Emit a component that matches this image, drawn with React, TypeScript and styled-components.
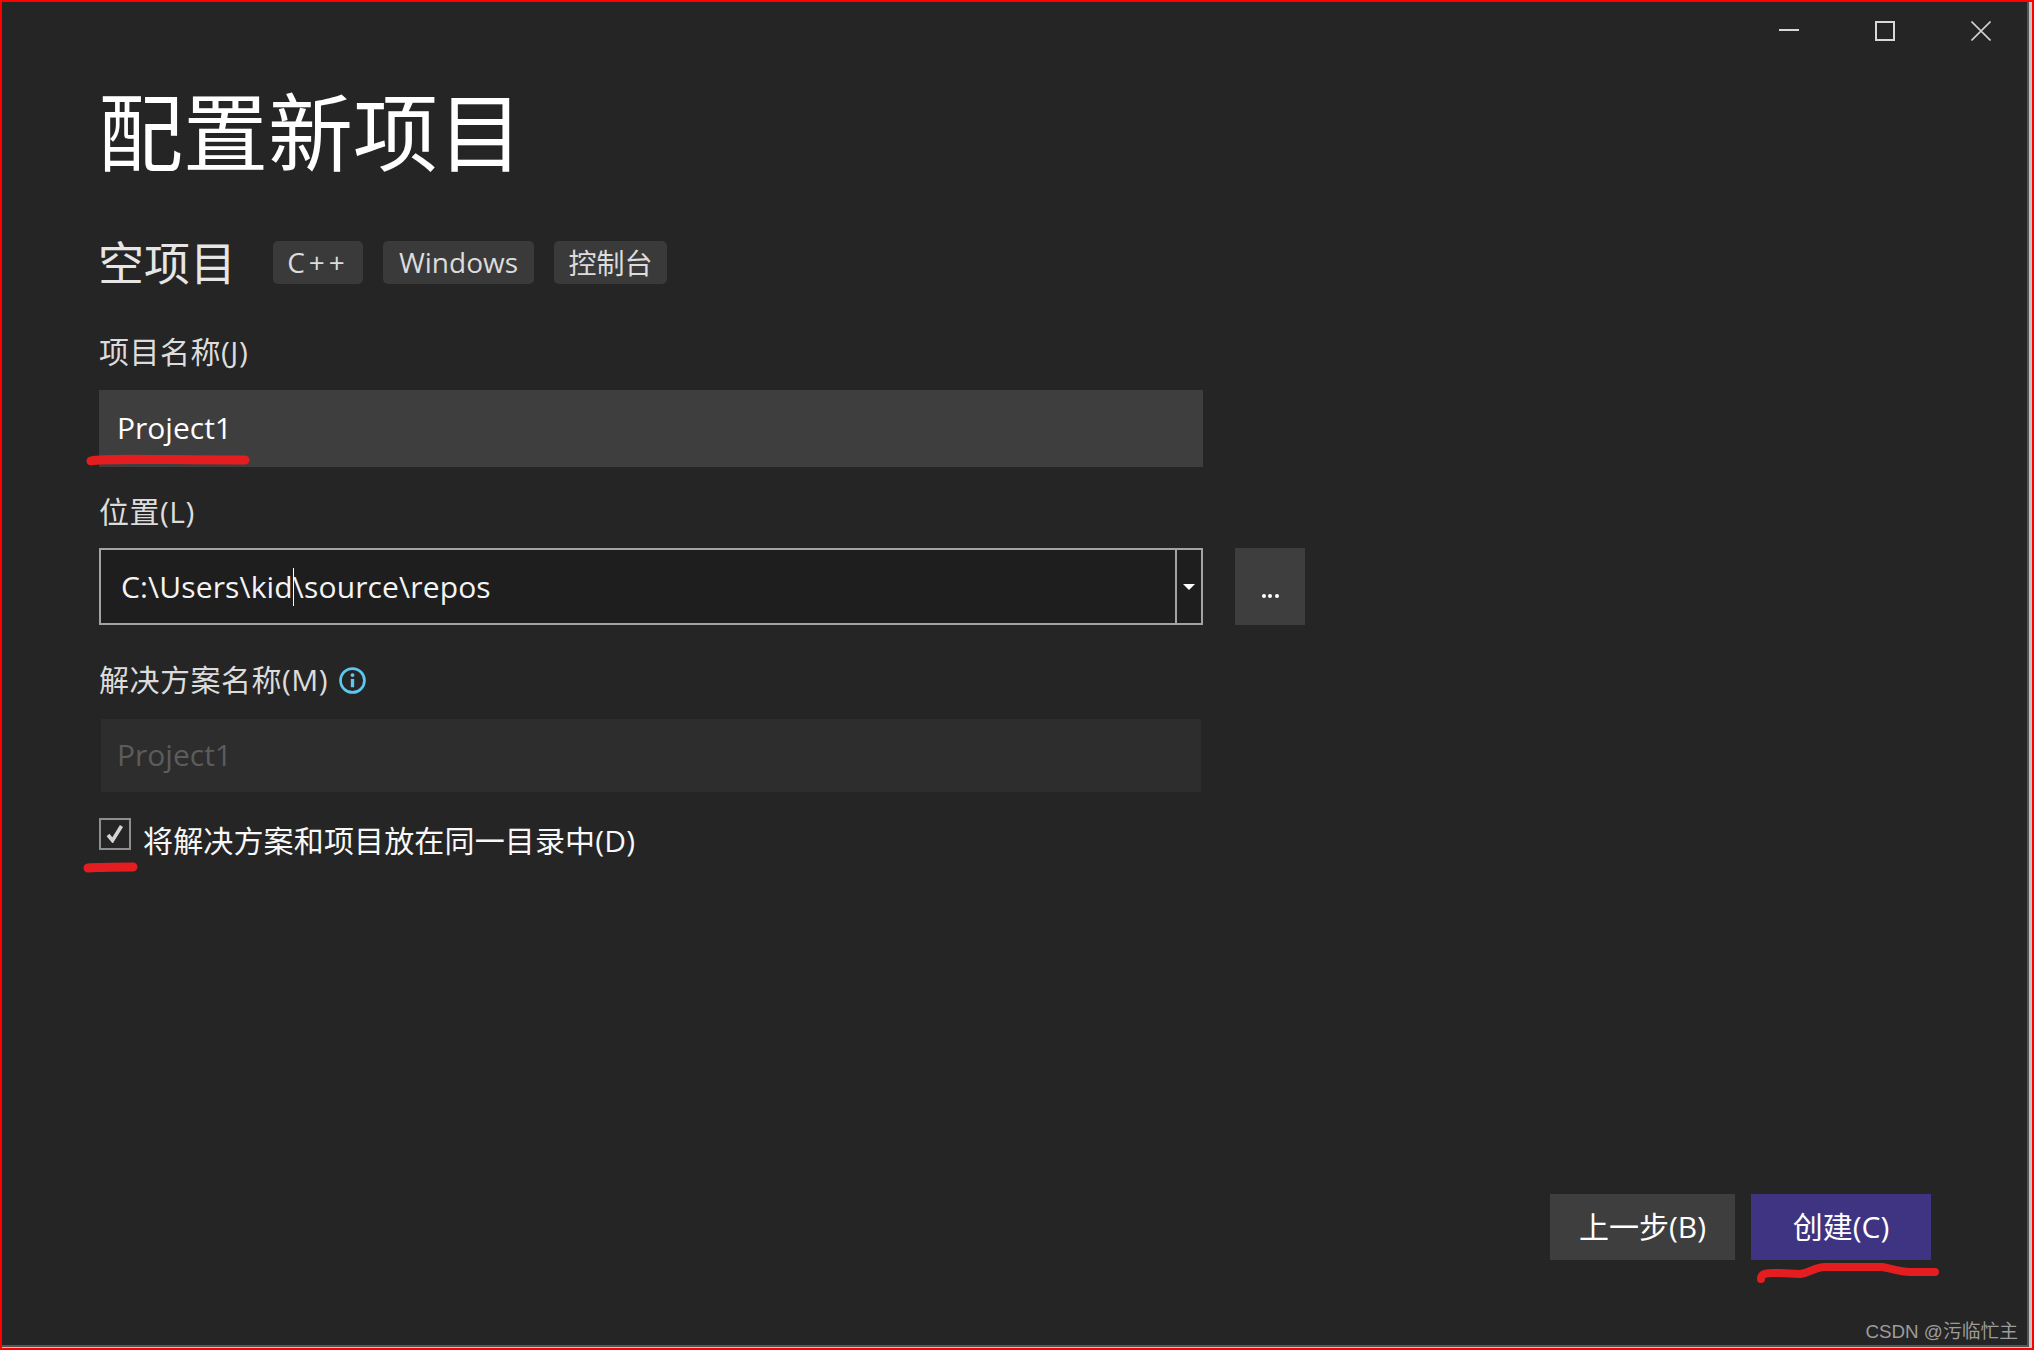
import React from "react";
import styled, { createGlobalStyle } from "styled-components";

const Global = createGlobalStyle`
  html, body { margin: 0; padding: 0; background: #252526; }
  * { box-sizing: border-box; }
`;

const FONT = `"Open Sans", "Noto Sans CJK SC", sans-serif`;

const Frame = styled.div`
  position: relative;
  width: 2034px;
  height: 1350px;
  background: #252525;
  border: 2px solid #f00;
  box-shadow: inset -3px -1px 0 #c4c4c4, inset -5px -3px 0 #555;
  color: #f1f1f1;
  font-family: ${FONT};
  display: flex;
  flex-direction: column;
  overflow: hidden;
`;

const TitleBar = styled.div`
  display: flex;
  justify-content: flex-end;
  height: 39px;
  padding: 19px 41px 0 0;
  gap: 76px;
  flex: none;
`;

const Content = styled.div`
  flex: 1;
  padding: 0 0 0 97px;
  display: flex;
  flex-direction: column;
  align-items: flex-start;
`;

const Title = styled.h1`
  margin: 41px 0 0 -1px;
  font-size: 85px;
  line-height: 100px;
  font-weight: 400;
  color: #fff;
`;

const SubRow = styled.div`
  display: flex;
  align-items: center;
  margin-top: 50px;
  height: 60px;
`;

const Subtitle = styled.h2`
  margin: 0 37px 0 -1px;
  font-size: 46px;
  line-height: 60px;
  font-weight: 400;
  color: #e6e6e6;
`;

const Tag = styled.span<{ $w: number; $spacing?: number }>`
  display: flex;
  align-items: center;
  justify-content: center;
  width: ${(p) => p.$w}px;
  height: 43px;
  margin-right: 20px;
  padding-bottom: 1px;
  background: #3a3a3b;
  border-radius: 5px;
  font-size: 28px;
  letter-spacing: ${(p) => p.$spacing ?? 0}px;
  color: #dcdcdc;
`;

const Label = styled.label<{ $mt: number }>`
  display: flex;
  align-items: center;
  gap: 11px;
  margin-top: ${(p) => p.$mt}px;
  height: 40px;
  font-size: 30px;
  line-height: 40px;
  letter-spacing: 0.5px;
  color: #dcdcdc;
`;

const TextField = styled.div`
  display: flex;
  align-items: center;
  margin-top: 18px;
  width: 1104px;
  height: 77px;
  padding: 0 0 2px 18px;
  background: #3e3e3e;
  font-size: 30px;
  color: #fff;
`;

const DisabledField = styled(TextField)`
  margin: 19px 0 0 2px;
  width: 1100px;
  height: 73px;
  padding: 0 0 2px 16px;
  background: #2d2d2d;
  color: #5c5c5c;
`;

const ComboRow = styled.div`
  display: flex;
  gap: 32px;
  margin-top: 16px;
`;

const Combo = styled.div`
  display: flex;
  width: 1104px;
  height: 77px;
  border: 2px solid #a3a3a3;
  background: #1e1e1e;
`;

const ComboText = styled.div`
  position: relative;
  flex: 1;
  display: flex;
  align-items: center;
  padding-left: 20px;
  font-size: 30px;
  letter-spacing: 0.15px;
  color: #f4f4f4;
  white-space: pre;
`;

const Caret = styled.i`
  display: inline-block;
  width: 1px;
  height: 38px;
  margin-right: -1px;
  background: #fff;
`;

const ComboArrow = styled.div`
  flex: none;
  width: 26px;
  border-left: 2px solid #a3a3a3;
  display: flex;
  align-items: center;
  justify-content: center;
`;

const Browse = styled.div`
  width: 70px;
  height: 77px;
  background: #3e3e3e;
  display: flex;
  justify-content: center;
  align-items: flex-start;
  padding-top: 46px;
  gap: 2.5px;
`;

const Dot = styled.i`
  width: 4px;
  height: 4px;
  border-radius: 50%;
  background: #fff;
`;

const CheckRow = styled.div`
  display: flex;
  align-items: flex-start;
  gap: 12px;
  margin-top: 26px;
`;

const CheckBox = styled.div`
  width: 32px;
  height: 32px;
  border: 2px solid #8f8f8f;
  display: flex;
  align-items: center;
  justify-content: center;
`;

const CheckLabel = styled.span`
  font-size: 30px;
  line-height: 40px;
  letter-spacing: 0.15px;
  margin-top: 3px;
  color: #f8f8f8;
`;

const Footer = styled.div`
  display: flex;
  justify-content: flex-end;
  gap: 16px;
  margin-top: auto;
  padding-right: 101px;
  padding-bottom: 88px;
  align-self: stretch;
`;

const Button = styled.button<{ $w: number; $primary?: boolean }>`
  width: ${(p) => p.$w}px;
  height: 66px;
  border: 0;
  padding: 0 0 4px;
  background: ${(p) => (p.$primary ? "#3f3482" : "#3e3e3e")};
  color: #fff;
  font-family: ${FONT};
  font-size: 30px;
`;

const Watermark = styled.div`
  position: absolute;
  right: 14px;
  bottom: 5px;
  font-family: "Liberation Sans", "Noto Sans CJK SC", sans-serif;
  font-size: 18.8px;
  line-height: 22px;
  color: #9c9c9c;
`;

const Annotation = styled.svg`
  position: absolute;
  left: -2px;
  top: -2px;
  pointer-events: none;
`;

export default function App() {
  return (
    <>
      <Global />
      <Frame>
        <TitleBar>
          <svg width="20" height="20" viewBox="0 0 20 20"><path d="M0 9h20" stroke="#d8d8d8" strokeWidth="2" fill="none" /></svg>
          <svg width="20" height="20" viewBox="0 0 20 20"><rect x="1" y="1" width="18" height="18" stroke="#d8d8d8" strokeWidth="2" fill="none" /></svg>
          <svg width="20" height="20" viewBox="0 0 20 20"><path d="M0.5 0.5l19 19M19.5 0.5l-19 19" stroke="#d0d0d0" strokeWidth="1.6" fill="none" /></svg>
        </TitleBar>
        <Content>
          <Title>配置新项目</Title>
          <SubRow>
            <Subtitle>空项目</Subtitle>
            <Tag $w={90} $spacing={4}>C++</Tag>
            <Tag $w={151}>Windows</Tag>
            <Tag $w={113}>控制台</Tag>
          </SubRow>
          <Label $mt={40}>项目名称(J)</Label>
          <TextField>Project1</TextField>
          <Label $mt={25}>位置(L)</Label>
          <ComboRow>
            <Combo>
              <ComboText>C:\Users\kid<Caret />\source\repos</ComboText>
              <ComboArrow>
                <svg width="12" height="6" viewBox="0 0 12 6"><path d="M0 0h12L6 6z" fill="#fff" /></svg>
              </ComboArrow>
            </Combo>
            <Browse><Dot /><Dot /><Dot /></Browse>
          </ComboRow>
          <Label $mt={35}>
            解决方案名称(M)
            <svg width="27" height="27" viewBox="0 0 26 26">
              <circle cx="13" cy="13" r="11.5" stroke="#5cc8f0" strokeWidth="2.6" fill="none" />
              <circle cx="13" cy="7.8" r="1.9" fill="#5cc8f0" />
              <path d="M13 11.5v8" stroke="#5cc8f0" strokeWidth="3.2" fill="none" />
            </svg>
          </Label>
          <DisabledField>Project1</DisabledField>
          <CheckRow>
            <CheckBox>
              <svg width="18" height="18" viewBox="0 0 18 18"><path d="M2 10l4.5 5.5L15.5 1" stroke="#d4d4d4" strokeWidth="3.6" fill="none" /></svg>
            </CheckBox>
            <CheckLabel>将解决方案和项目放在同一目录中(D)</CheckLabel>
          </CheckRow>
          <Footer>
            <Button $w={185}>上一步(B)</Button>
            <Button $w={180} $primary>创建(C)</Button>
          </Footer>
        </Content>
        <Watermark>CSDN @污临忙主</Watermark>
        <Annotation width="2034" height="1350" viewBox="0 0 2034 1350" fill="none" stroke="#e41e20" strokeLinecap="round">
          <path d="M91 461C100 458 160 460 245 460" strokeWidth="9" />
          <path d="M88 868C100 867 120 867 133 867" strokeWidth="9" />
          <path d="M1761 1279C1761 1272 1770 1273 1780 1273L1800 1274C1810 1273 1815 1267 1825 1267L1882 1267C1890 1268 1900 1272 1910 1272L1935 1272" strokeWidth="8" />
        </Annotation>
      </Frame>
    </>
  );
}
